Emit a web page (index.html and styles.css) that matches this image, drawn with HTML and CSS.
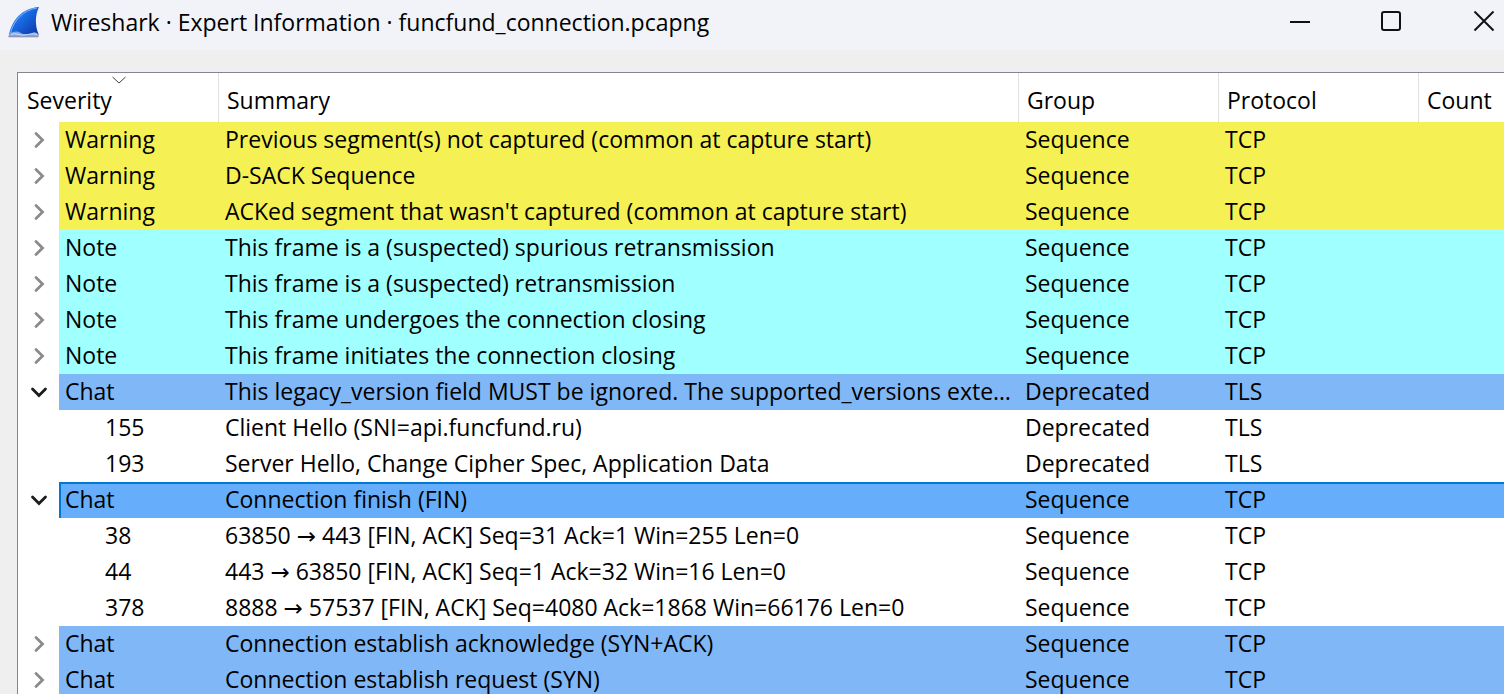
FILE: index.html
```html
<!DOCTYPE html>
<html lang="en">
<head>
<meta charset="utf-8">
<title>Wireshark · Expert Information · funcfund_connection.pcapng</title>
<link rel="stylesheet" href="styles.css">
</head>
<body>
<svg class="symbols" aria-hidden="true">
  <symbol id="closed" viewBox="0 0 16 18"><path d="M5 2.500 11.500 9 5 15.500" fill="none" stroke="#8b8b8b" stroke-width="2.800" stroke-linecap="round"/></symbol>
  <symbol id="open" viewBox="0 0 18 12"><path d="M2.500 3 9 9.500l6.500-6.500" fill="none" stroke="#1c1c1c" stroke-width="2.800" stroke-linecap="round"/></symbol>
</svg>
<header class="titlebar">
  <svg class="logo" viewBox="0 0 32 32" aria-hidden="true">
    <defs>
      <linearGradient id="fin" x1="0" y1="0" x2="1" y2="1"><stop offset="0" stop-color="#58a8fa"/><stop offset=".45" stop-color="#1767de"/><stop offset="1" stop-color="#0b2fa0"/></linearGradient>
    </defs>
    <path d="M1 29C4 14 14 2 31 1 27 9 27 20 30.500 28L30 31H1Z" fill="url(#fin)"/>
    <path d="M2.500 27C6 14 15 4 29 2" fill="none" stroke="#76b5ff" stroke-width="1"/>
    <path d="M1 28c5-3 8-3 12-1s8 2 11 0 5 0 6.500 1.500L30 31H.5Z" fill="#7fa5e6"/>
    <path d="M3 28.500c5-2 8 1 13 .5s8-2 13-.5" fill="none" stroke="#d5e4fb" stroke-width="1"/>
    <path d="M.5 30.800H30.500" stroke="#8a93a8" stroke-width="1"/>
  </svg>
  <h1 class="title">Wireshark · Expert Information · funcfund_connection.pcapng</h1>
  <div class="controls">
    <button class="control" type="button" aria-label="Minimize"><svg viewBox="0 0 22 22"><path d="M1 11H21"/></svg></button>
    <button class="control" type="button" aria-label="Maximize"><svg viewBox="0 0 22 22"><rect x="1" y="1" width="18" height="18" rx="2"/></svg></button>
    <button class="control" type="button" aria-label="Close"><svg viewBox="0 0 22 22"><path d="M1.500 .5l19 19M20.500 .5l-19 19"/></svg></button>
  </div>
</header>
<main class="content">
  <table class="tree">
    <colgroup><col class="col-severity"><col><col class="col-mid"><col class="col-mid"><col class="col-count"></colgroup>
    <thead>
      <tr><th scope="col" aria-sort="descending">Severity<svg class="sort" viewBox="0 0 14 8" aria-hidden="true"><path d="M.5 1 7 7l6.500-6" fill="none" stroke="#444"/></svg></th><th scope="col">Summary</th><th scope="col">Group</th><th scope="col">Protocol</th><th scope="col">Count</th></tr>
    </thead>
    <tbody>
      <tr class="warning"><td><div class="node"><button class="toggle" type="button" aria-label="Expand"><svg class="closed"><use href="#closed"/></svg></button><span class="label">Warning</span></div></td><td>Previous segment(s) not captured (common at capture start)</td><td>Sequence</td><td>TCP</td><td></td></tr>
      <tr class="warning"><td><div class="node"><button class="toggle" type="button" aria-label="Expand"><svg class="closed"><use href="#closed"/></svg></button><span class="label">Warning</span></div></td><td>D-SACK Sequence</td><td>Sequence</td><td>TCP</td><td></td></tr>
      <tr class="warning"><td><div class="node"><button class="toggle" type="button" aria-label="Expand"><svg class="closed"><use href="#closed"/></svg></button><span class="label">Warning</span></div></td><td>ACKed segment that wasn't captured (common at capture start)</td><td>Sequence</td><td>TCP</td><td></td></tr>
      <tr class="note"><td><div class="node"><button class="toggle" type="button" aria-label="Expand"><svg class="closed"><use href="#closed"/></svg></button><span class="label">Note</span></div></td><td>This frame is a (suspected) spurious retransmission</td><td>Sequence</td><td>TCP</td><td></td></tr>
      <tr class="note"><td><div class="node"><button class="toggle" type="button" aria-label="Expand"><svg class="closed"><use href="#closed"/></svg></button><span class="label">Note</span></div></td><td>This frame is a (suspected) retransmission</td><td>Sequence</td><td>TCP</td><td></td></tr>
      <tr class="note"><td><div class="node"><button class="toggle" type="button" aria-label="Expand"><svg class="closed"><use href="#closed"/></svg></button><span class="label">Note</span></div></td><td>This frame undergoes the connection closing</td><td>Sequence</td><td>TCP</td><td></td></tr>
      <tr class="note"><td><div class="node"><button class="toggle" type="button" aria-label="Expand"><svg class="closed"><use href="#closed"/></svg></button><span class="label">Note</span></div></td><td>This frame initiates the connection closing</td><td>Sequence</td><td>TCP</td><td></td></tr>
      <tr class="chat"><td><div class="node"><button class="toggle" type="button" aria-label="Collapse"><svg class="open"><use href="#open"/></svg></button><span class="label">Chat</span></div></td><td>This legacy_version field MUST be ignored. The supported_versions exte…</td><td>Deprecated</td><td>TLS</td><td></td></tr>
      <tr class="packet"><td><div class="node"><span class="label">155</span></div></td><td>Client Hello (SNI=api.funcfund.ru)</td><td>Deprecated</td><td>TLS</td><td></td></tr>
      <tr class="packet"><td><div class="node"><span class="label">193</span></div></td><td>Server Hello, Change Cipher Spec, Application Data</td><td>Deprecated</td><td>TLS</td><td></td></tr>
      <tr class="chat current"><td><div class="node"><button class="toggle" type="button" aria-label="Collapse"><svg class="open"><use href="#open"/></svg></button><span class="label">Chat</span></div></td><td>Connection finish (FIN)</td><td>Sequence</td><td>TCP</td><td></td></tr>
      <tr class="packet"><td><div class="node"><span class="label">38</span></div></td><td>63850 → 443 [FIN, ACK] Seq=31 Ack=1 Win=255 Len=0</td><td>Sequence</td><td>TCP</td><td></td></tr>
      <tr class="packet"><td><div class="node"><span class="label">44</span></div></td><td>443 → 63850 [FIN, ACK] Seq=1 Ack=32 Win=16 Len=0</td><td>Sequence</td><td>TCP</td><td></td></tr>
      <tr class="packet"><td><div class="node"><span class="label">378</span></div></td><td>8888 → 57537 [FIN, ACK] Seq=4080 Ack=1868 Win=66176 Len=0</td><td>Sequence</td><td>TCP</td><td></td></tr>
      <tr class="chat"><td><div class="node"><button class="toggle" type="button" aria-label="Expand"><svg class="closed"><use href="#closed"/></svg></button><span class="label">Chat</span></div></td><td>Connection establish acknowledge (SYN+ACK)</td><td>Sequence</td><td>TCP</td><td></td></tr>
      <tr class="chat"><td><div class="node"><button class="toggle" type="button" aria-label="Expand"><svg class="closed"><use href="#closed"/></svg></button><span class="label">Chat</span></div></td><td>Connection establish request (SYN)</td><td>Sequence</td><td>TCP</td><td></td></tr>
    </tbody>
  </table>
</main>
</body>
</html>
```
FILE: styles.css
```css
* { box-sizing: border-box; }

body {
  margin: 0;
  height: 100vh;
  overflow: hidden;
  display: flex;
  flex-direction: column;
  background: #efefef;
  color: #000;
  font: 23px/34px "Open Sans", "DejaVu Sans", sans-serif;
}

.symbols { position: absolute; width: 0; height: 0; }

button {
  padding: 0;
  border: 0;
  background: none;
  font: inherit;
}

.titlebar {
  display: flex;
  flex: none;
  align-items: center;
  height: 50px;
  padding: 0 9px 6px 8px;
  background: #f1f3f9;
}

.logo { width: 32px; height: 32px; margin-right: 11px; }

.title {
  flex: 1;
  min-width: 0;
  margin: 0;
  overflow: hidden;
  font-size: 23px;
  font-weight: 400;
  white-space: nowrap;
}

.controls { display: flex; gap: 70px; }

.control { width: 22px; height: 22px; }

.control svg {
  display: block;
  width: 22px;
  height: 22px;
  fill: none;
  stroke: #111;
  stroke-width: 2;
}

.content {
  flex: 1;
  min-height: 0;
  margin: 22px 0 0 17px;
  overflow: hidden;
  border: solid #83868c;
  border-width: 1px 0 0 1px;
  background: #fff;
}

.tree {
  width: 100%;
  table-layout: fixed;
  border-collapse: separate;
  border-spacing: 0;
}

.col-severity { width: 201px; }
.col-mid { width: 200px; }
.col-count { width: 85px; }

th {
  position: relative;
  height: 49px;
  padding: 4px 0 0 8px;
  border-right: 1px solid #e0e0e0;
  font-weight: 400;
  text-align: left;
}

th:first-child { padding-left: 9px; }
th:last-child { border-right: 0; }

.sort {
  position: absolute;
  top: 3px;
  left: calc(50% - 6px);
  width: 14px;
  height: 8px;
}

td {
  height: 36px;
  padding: 0 6px 2px;
  overflow: hidden;
  background: var(--row);
  text-overflow: ellipsis;
  white-space: nowrap;
}

td:first-child {
  padding: 0;
  background: #fff;
}

.node { display: flex; height: 36px; }

.toggle {
  display: flex;
  flex: none;
  align-items: center;
  justify-content: center;
  width: 41px;
}

.closed { width: 16px; height: 18px; }
.open { width: 18px; height: 12px; }

.label {
  flex: 1;
  padding-left: 6px;
  background: var(--row);
}

.warning { --row: #f5f154; }
.note { --row: #a0ffff; }
.chat { --row: #80b7f7; }
.packet { --row: #fff; }

.packet .label { padding-left: 87px; }

.current { --row: #66adfb; }
.current td:not(:first-child) { box-shadow: inset 0 2px #0078d4; }
.current .label { box-shadow: inset 2px 2px #0078d4; }
```
